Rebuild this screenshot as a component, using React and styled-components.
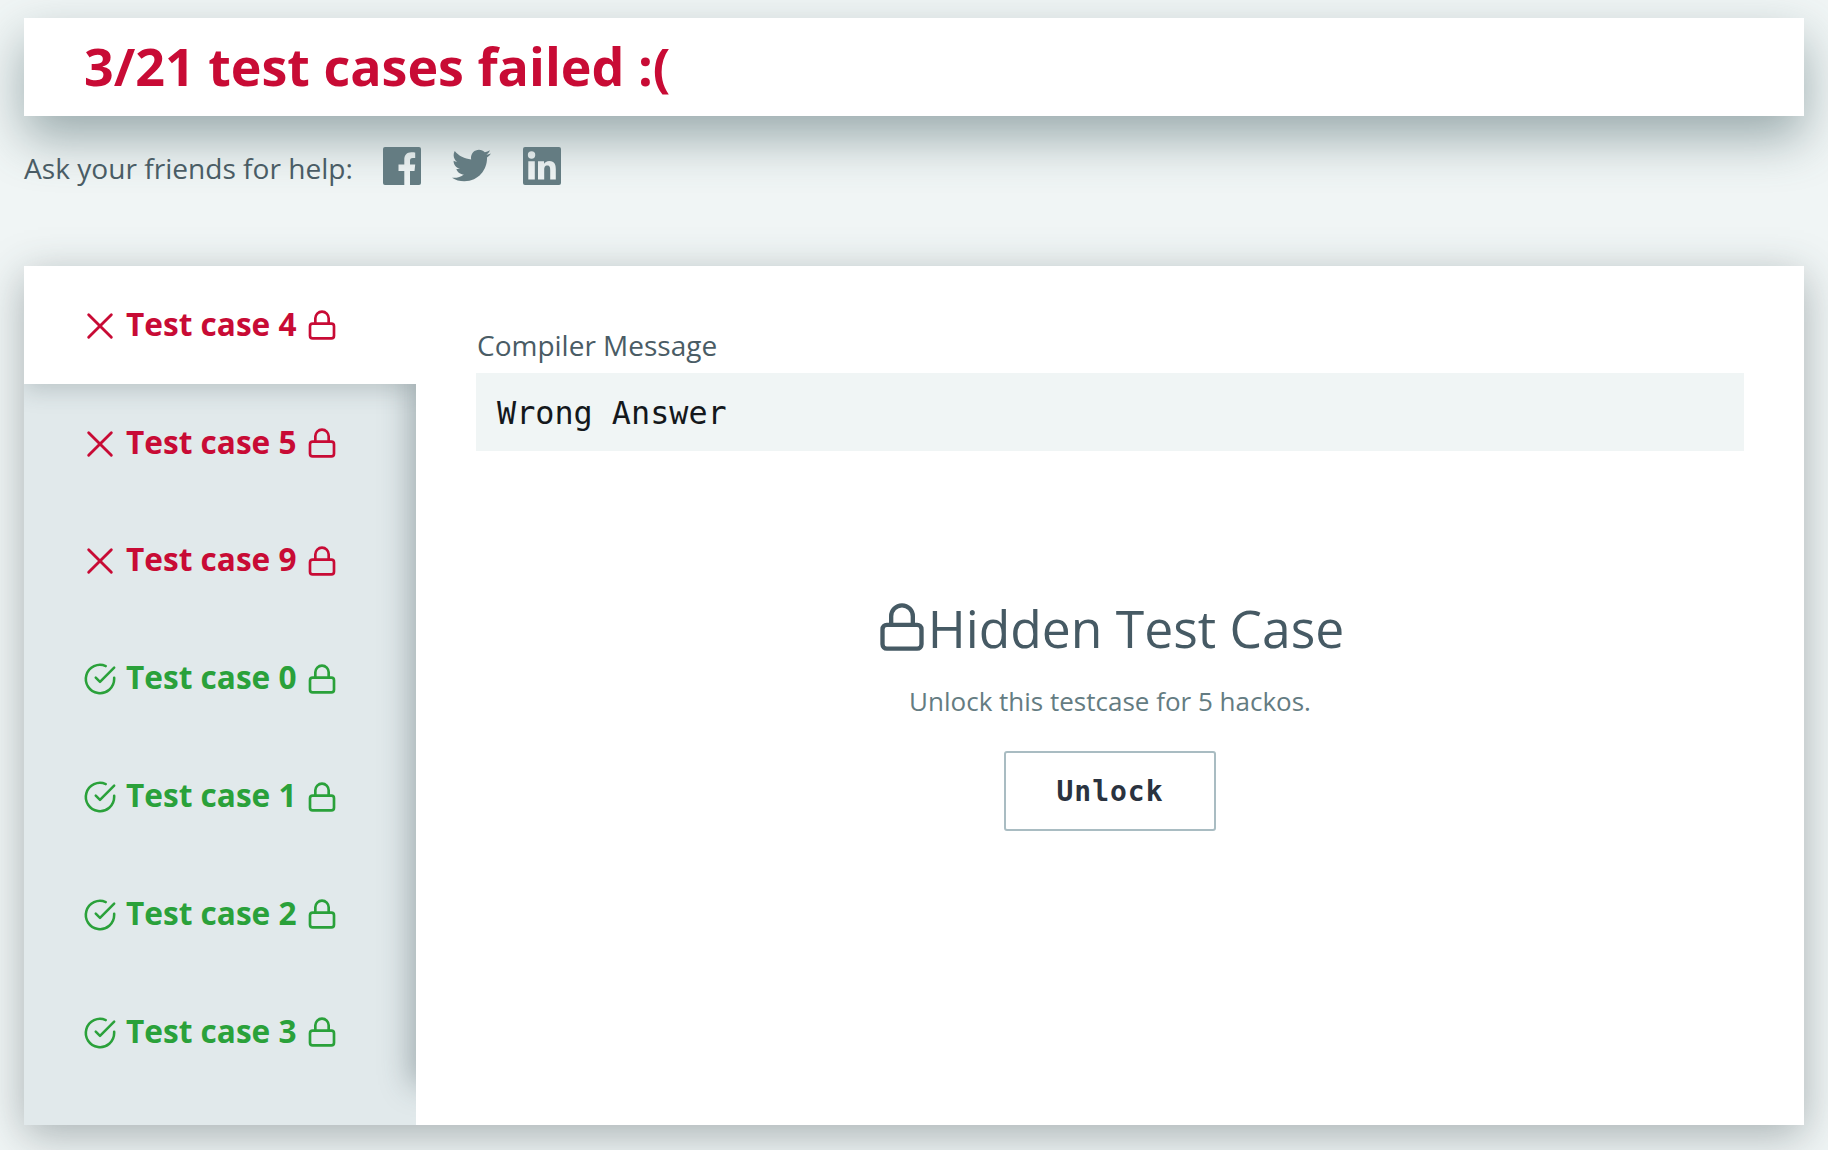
import React from "react"
import styled, { createGlobalStyle } from "styled-components"
import { FaTwitter } from "react-icons/fa"

const RED = "#c80b35"
const GREEN = "#2aa13a"

const cases = [
  { id: 4, ok: false, active: true },
  { id: 5, ok: false },
  { id: 9, ok: false },
  { id: 0, ok: true },
  { id: 1, ok: true },
  { id: 2, ok: true },
  { id: 3, ok: true },
]

const LockIcon = ({ size }) => (
  <svg width={size} height={size} viewBox="0 0 24 24" fill="none" stroke="currentColor" strokeWidth="2" strokeLinecap="round" strokeLinejoin="round">
    <rect x="3" y="11" width="18" height="11" rx="2" ry="2" />
    <path d="M7 11V7a5 5 0 0 1 10 0v4" />
  </svg>
)

const CrossIcon = () => (
  <svg width="34" height="34" viewBox="0 0 24 24" fill="none" stroke="currentColor" strokeWidth="2" strokeLinecap="round" strokeLinejoin="round">
    <line x1="20" y1="4" x2="4" y2="20" />
    <line x1="4" y1="4" x2="20" y2="20" />
  </svg>
)

const CheckIcon = () => (
  <svg width="34" height="34" viewBox="0 0 24 24" fill="none" stroke="currentColor" strokeWidth="1.8" strokeLinecap="round" strokeLinejoin="round">
    <path d="M22 11.08V12a10 10 0 1 1-5.93-9.14" />
    <polyline points="22 4 12 14.01 9 11.01" />
  </svg>
)

const FacebookIcon = () => (
  <svg width="38" height="38" viewBox="0 0 38 38">
    <path
      fill="currentColor"
      d="M2 0h34a2 2 0 0 1 2 2v34a2 2 0 0 1-2 2H27V24h4.500l.7-6.500H27V14c0-1.800.5-3 2.900-3h2.300V5.400c-.5-.1-2.100-.2-4-.2-4.200 0-6.900 2.700-6.900 7.600v4.700h-5.800V24h5.800v14H2a2 2 0 0 1-2-2V2a2 2 0 0 1 2-2z"
    />
  </svg>
)

const LinkedinIcon = () => (
  <svg width="38" height="38" viewBox="0 0 38 38">
    <path
      fill="currentColor"
      fillRule="evenodd"
      d="M2 0h34a2 2 0 0 1 2 2v34a2 2 0 0 1-2 2H2a2 2 0 0 1-2-2V2a2 2 0 0 1 2-2zM5.300 14.300v18.300h6.500V14.300zM8.550 4.300a3.700 3.700 0 1 0 0 7.400 3.700 3.700 0 0 0 0-7.400zM15 14.300v18.300h6.200v-9.500c0-2.500.5-4.500 3.200-4.500s2.800 2.500 2.800 4.600v9.400h5.600v-10.300c0-4.800-1-8.400-6.500-8.400-2.700 0-4.500 1.500-5.200 2.900h-.1v-2.500z"
    />
  </svg>
)

export default function App() {
  return (
    <Page>
      <GlobalStyle />
      <Banner>
        <Title>3/21 test cases failed :(</Title>
      </Banner>
      <ShareRow>
        <ShareLabel>Ask your friends for help:</ShareLabel>
        <ShareIcons>
          <FacebookIcon />
          <FaTwitter size={39} />
          <LinkedinIcon />
        </ShareIcons>
      </ShareRow>
      <Card>
        <Sidebar>
          {cases.map((c) => (
            <Tab key={c.id} $ok={c.ok} $active={c.active}>
              {c.ok ? <CheckIcon /> : <CrossIcon />}
              <TabLabel>Test case {c.id}</TabLabel>
              <LockIcon size={32} />
            </Tab>
          ))}
        </Sidebar>
        <Content>
          <Label>Compiler Message</Label>
          <Message>Wrong Answer</Message>
          <Hidden>
            <HiddenTitle>
              <LockIcon size={52} />
              Hidden Test Case
            </HiddenTitle>
            <HiddenText>Unlock this testcase for 5 hackos.</HiddenText>
            <UnlockButton>Unlock</UnlockButton>
          </Hidden>
        </Content>
      </Card>
    </Page>
  )
}

const GlobalStyle = createGlobalStyle`
  html, body {
    margin: 0;
    background: #f0f5f5;
    font-family: "Open Sans", sans-serif;
  }
`

const Page = styled.div`
  box-sizing: border-box;
  height: 1150px;
  overflow: hidden;
  padding: 18px 24px 0;
  display: flex;
  flex-direction: column;
`

const Banner = styled.div`
  height: 98px;
  flex: none;
  background: #fff;
  box-shadow: 0 22px 50px rgba(60, 90, 95, 0.48);
  display: flex;
  align-items: center;
  padding-left: 60px;
  position: relative;
`

const Title = styled.h1`
  margin: 0 0 4px;
  font-size: 52px;
  font-weight: 700;
  color: ${RED};
`

const ShareRow = styled.div`
  display: flex;
  align-items: center;
  height: 52px;
  margin-top: 26px;
  position: relative;
`

const ShareLabel = styled.span`
  font-size: 28.1px;
  color: #4a5c65;
`

const ShareIcons = styled.div`
  display: flex;
  align-items: center;
  gap: 31.5px;
  margin-left: 30px;
  margin-top: -5px;
  color: #647c82;
`

const Card = styled.div`
  display: flex;
  height: 859px;
  flex: none;
  margin-top: 72px;
  background: #fff;
  box-shadow: 0 10px 40px rgba(50, 65, 70, 0.38);
`

const Sidebar = styled.div`
  width: 392px;
  flex: none;
  background: #e1e9eb;
  display: flex;
  flex-direction: column;
`

const Tab = styled.div`
  height: 117.8px;
  flex: none;
  box-sizing: border-box;
  padding-left: 59px;
  display: flex;
  align-items: center;
  gap: 9px;
  color: ${(p) => (p.$ok ? GREEN : RED)};
  background: ${(p) => (p.$active ? "#fff" : "transparent")};
  position: relative;
  z-index: ${(p) => (p.$active ? 2 : 0)};
  box-shadow: ${(p) => (p.$active ? "0 6px 22px rgba(50, 70, 75, 0.22)" : "none")};
  clip-path: ${(p) => (p.$active ? "inset(0 0 -40px 0)" : "none")};

  svg {
    margin-top: 2px;
  }
  svg:last-child {
    margin: 1px 0 0 0.5px;
  }
`

const TabLabel = styled.span`
  font-size: 31.6px;
  font-weight: 700;
  margin-top: -3px;
`

const Content = styled.div`
  flex: 1;
  background: #fff;
  padding: 60px 60px 0;
  display: flex;
  flex-direction: column;
  position: relative;
  z-index: 1;
  box-shadow: -6px -40px 28px rgba(50, 70, 75, 0.36);
  clip-path: inset(0 0 0 -40px);
`

const Label = styled.div`
  font-size: 28px;
  color: #4a5c65;
  line-height: 38px;
  padding-left: 1px;
`

const Message = styled.pre`
  margin: 9px 0 0;
  box-sizing: border-box;
  height: 78px;
  padding: 1px 0 0 21px;
  display: flex;
  align-items: center;
  background: #f0f5f5;
  color: #14181c;
  font-family: "DejaVu Sans Mono", monospace;
  font-size: 31.8px;
`

const Hidden = styled.div`
  display: flex;
  flex-direction: column;
  align-items: center;
  margin-top: 142px;
`

const HiddenTitle = styled.h2`
  margin: 0;
  display: flex;
  align-items: center;
  font-size: 51.6px;
  font-weight: 400;
  color: #465a64;

  svg {
    margin-top: -3px;
  }
`

const HiddenText = styled.p`
  margin: 20px 0 0;
  font-size: 26px;
  color: #647c82;
`

const UnlockButton = styled.button`
  margin-top: 32px;
  width: 212px;
  height: 80px;
  background: #fff;
  border: 2px solid #a9bcc2;
  border-radius: 3px;
  font-family: "DejaVu Sans Mono", monospace;
  font-size: 28px;
  font-weight: 700;
  letter-spacing: 1px;
  color: #2a3340;
`
